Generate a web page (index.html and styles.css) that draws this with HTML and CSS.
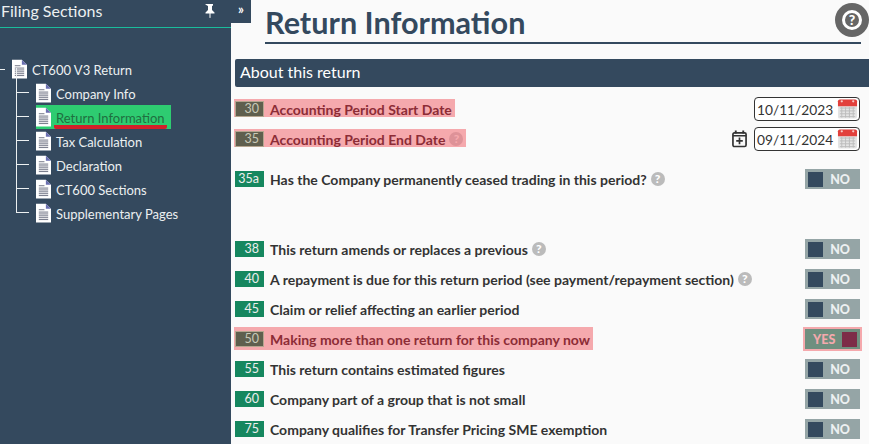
FILE: index.html
```html
<!DOCTYPE html>
<html lang="en">
<head>
  <meta charset="UTF-8" />
  <title>Return Information</title>
  <link rel="stylesheet" href="styles.css">
</head>
<body>
  <svg class="defs" width="0" height="0">
    <symbol id="doc" viewBox="0 0 16 20">
      <path d="M0 0h10.500l5.500 5.500v14.500h-16z" fill="#fff"/>
      <path d="M10.500 0l5.500 5.500h-5.500z" fill="#6a6fb0"/>
      <path d="M3 6.500h6M3 9h10M3 11h10M3 13h10M3 15h10M3 17h10" stroke="#6b6f80" stroke-width="1" fill="none"/>
    </symbol>
    <symbol id="cal" viewBox="0 0 22 22">
      <rect x="1" y="1" width="20" height="20" rx="2" fill="#e4e4e4"/>
      <path d="M1 3a2 2 0 0 1 2-2h16a2 2 0 0 1 2 2v5h-20z" fill="#e2403c"/>
      <circle cx="5" cy="3" r="1.200" fill="#f6c9c7"/>
      <circle cx="17" cy="3" r="1.200" fill="#f6c9c7"/>
      <path d="M3 10h16M3 13h16M3 16h16M3 19h16M5 9v11M9 9v11M13 9v11M17 9v11" stroke="#bcbcbc" stroke-width="1" fill="none"/>
    </symbol>
  </svg>

  <aside class="sidebar">
    <h1 class="side-title">
      <span>Filing Sections</span>
      <svg class="pin" width="12" height="14" viewBox="0 0 12 14"><path d="M2 0h8v1.500l-1 .5v4l2.500 2.500v1h-4v4l-.5 1-.5-1v-4h-4v-1l2.500-2.500v-4l-1-.5z" fill="#fff"/></svg>
    </h1>
    <div class="tree">
      <div class="node root"><svg class="doc"><use href="#doc"/></svg><span>CT600 V3 Return</span></div>
      <ul class="branch">
        <li class="node"><svg class="doc"><use href="#doc"/></svg><span>Company Info</span></li>
        <li class="node active"><svg class="doc"><use href="#doc"/></svg><span>Return Information</span></li>
        <li class="node"><svg class="doc"><use href="#doc"/></svg><span>Tax Calculation</span></li>
        <li class="node"><svg class="doc"><use href="#doc"/></svg><span>Declaration</span></li>
        <li class="node"><svg class="doc"><use href="#doc"/></svg><span>CT600 Sections</span></li>
        <li class="node"><svg class="doc"><use href="#doc"/></svg><span>Supplementary Pages</span></li>
      </ul>
    </div>
  </aside>
  <button class="collapse">»</button>

  <main class="content">
    <header class="page-head">
      <h2>Return Information</h2>
      <span class="help"><span class="help-ring">?</span></span>
    </header>

    <h3 class="section">About this return</h3>

    <div class="row">
      <div class="label bad"><span class="box">30</span><span class="txt">Accounting Period Start Date</span></div>
      <div class="date"><span>10/11/2023</span><svg class="cal"><use href="#cal"/></svg></div>
    </div>
    <div class="row">
      <div class="label bad"><span class="box">35</span><span class="txt">Accounting Period End Date</span><span class="q">?</span></div>
      <svg class="addcal" width="15" height="18" viewBox="0 0 16 18"><path d="M4 0v3M12 0v3" stroke="#333" stroke-width="2"/><rect x="1" y="2.500" width="14" height="14.500" rx="1.500" fill="none" stroke="#333" stroke-width="1.800"/><path d="M1 5.500h14M8 7.500v7M4.500 11h7" stroke="#333" stroke-width="1.800"/></svg>
      <div class="date"><span>09/11/2024</span><svg class="cal"><use href="#cal"/></svg></div>
    </div>
    <div class="row gap-top">
      <div class="label"><span class="box">35a</span><span class="txt">Has the Company permanently ceased trading in this period?</span><span class="q">?</span></div>
      <div class="toggle"><i></i><b>NO</b></div>
    </div>
    <div class="row gap-big">
      <div class="label"><span class="box">38</span><span class="txt">This return amends or replaces a previous</span><span class="q">?</span></div>
      <div class="toggle"><i></i><b>NO</b></div>
    </div>
    <div class="row">
      <div class="label"><span class="box">40</span><span class="txt">A repayment is due for this return period (see payment/repayment section)</span><span class="q">?</span></div>
      <div class="toggle"><i></i><b>NO</b></div>
    </div>
    <div class="row">
      <div class="label"><span class="box">45</span><span class="txt">Claim or relief affecting an earlier period</span></div>
      <div class="toggle"><i></i><b>NO</b></div>
    </div>
    <div class="row">
      <div class="label bad tall"><span class="box">50</span><span class="txt">Making more than one return for this company now</span></div>
      <div class="toggle yes"><b>YES</b><i></i></div>
    </div>
    <div class="row">
      <div class="label"><span class="box">55</span><span class="txt">This return contains estimated figures</span></div>
      <div class="toggle"><i></i><b>NO</b></div>
    </div>
    <div class="row">
      <div class="label"><span class="box">60</span><span class="txt">Company part of a group that is not small</span></div>
      <div class="toggle"><i></i><b>NO</b></div>
    </div>
    <div class="row">
      <div class="label"><span class="box">75</span><span class="txt">Company qualifies for Transfer Pricing SME exemption</span></div>
      <div class="toggle"><i></i><b>NO</b></div>
    </div>
  </main>
</body>
</html>
```

FILE: styles.css
```css
* { margin:0; padding:0; box-sizing:border-box; }
html, body { height:100%; overflow:hidden; }
body { display:flex; font-family:Lato,"Liberation Sans",sans-serif; background:#fafafa; color:#2d2d2d; }
.defs { position:absolute; }

.sidebar { width:231px; flex:none; background:#34495e; color:#fff; }
.side-title { display:flex; justify-content:space-between; align-items:center; height:28px; padding:0 16px 6px 1px; font-size:16px; font-weight:400; border-bottom:1px solid #1abc9c; color:#ecf0f1; }
.collapse { position:absolute; left:231px; top:0; width:20px; height:23px; border:none; background:#34495e; color:#fff; font:700 13px Lato,sans-serif; padding-bottom:5px; }

.tree { padding:29px 0 0 12px; font-size:13px; color:#ecf0f1; }
.node { display:flex; align-items:center; height:24px; position:relative; list-style:none; }
.node span { margin-left:5px; padding-top:2px; }
.doc { width:15px; height:20px; flex:none; }
.root::before { content:""; position:absolute; left:-12px; top:12px; width:5px; border-top:1px solid #ecf0f1; }
.branch { margin-left:24px; }
.branch .node::before { content:""; position:absolute; left:-20px; top:11px; width:13px; border-top:1px solid #ecf0f1; }
.branch .node::after { content:""; position:absolute; left:-20px; top:-13px; height:25px; border-left:1px solid #ecf0f1; }
.active { color:#1f6f3f; background:linear-gradient(#2ecc71,#2ecc71) no-repeat -7px 0 / 142px 24px; }
.active span { border-bottom:4px solid #d3202a; border-radius:2px; line-height:13px; margin:4px 0 0 3px; padding:2px 2px 0; }

.content { flex:1; min-width:0; padding-left:4px; }
.page-head { display:flex; height:59px; padding-left:30px; position:relative; }
.page-head h2 { flex:none; width:596px; height:44px; font-size:30.600px; line-height:45px; font-weight:700; color:#34495e; border-bottom:2px solid #34495e; }
.help { position:absolute; right:0; top:3px; width:34px; height:34px; border-radius:50%; background:#666; display:flex; align-items:center; justify-content:center; }
.help-ring { width:20px; height:20px; border:3px solid #fff; border-radius:50%; color:#fff; font-size:14px; font-weight:900; line-height:14px; text-align:center; }
.section { height:28px; line-height:26px; padding-left:5px; font-size:16px; font-weight:400; color:#fff; background:#34495e; border-radius:2px 0 0 2px; margin-bottom:7px; }

.row { display:flex; align-items:center; height:30px; padding-right:9px; }
.gap-top { margin-top:10px; }
.gap-big { margin-top:40px; }
.label { display:flex; align-items:center; flex:1; font-size:14px; font-weight:700; color:#333; }
.box { width:29px; height:16px; margin-right:6px; background:#16875f; color:#eee; font-size:12.500px; font-weight:400; line-height:16px; text-align:right; padding-right:5px; flex:none; }
.q { width:14px; height:14px; margin-left:4px; border-radius:50%; background:#bbb; color:#fff; font-size:12px; font-weight:900; line-height:14px; text-align:center; flex:none; }
.label.bad { flex:none; margin:0 auto 2px -1px; padding:0 3px 0 1px; height:18px; background:#f5a9ad; color:#8c2c36; }
.label.bad.tall { height:23px; margin-bottom:1px; }
.bad .box { margin-top:1px; background:#5f5f4e; color:#c9c9b8; outline:1px solid #b5a58f; outline-offset:-1px; }
.bad .txt { margin-top:2px; }
.bad .q { background:#de9298; color:#f5a9ad; margin-top:1px; }

.date { display:flex; align-items:center; justify-content:space-between; width:106px; height:24px; padding-left:2px; border:1px solid #333; border-radius:4px; background:#fff; font-size:13.750px; margin-left:7px; color:#333; }
.cal { width:21px; height:22px; margin-right:1px; }
.addcal { margin-left:auto; }
.row > .label:first-child + .date { margin-left:auto; }

.toggle { display:flex; align-items:center; justify-content:space-between; width:55px; height:20px; padding:0 10px 0 3px; background:#95a5a6; color:#ecf0f1; font-size:12.500px; }
.toggle b { font-weight:900; }
.toggle i { width:15px; height:15px; background:#34495e; }
.toggle.yes { background:#6f8f7f; color:#f5a9ad; padding:0 3px 0 8px; outline:2px solid #f5a9ad; }
.toggle.yes i { background:#7d2c48; }
```
